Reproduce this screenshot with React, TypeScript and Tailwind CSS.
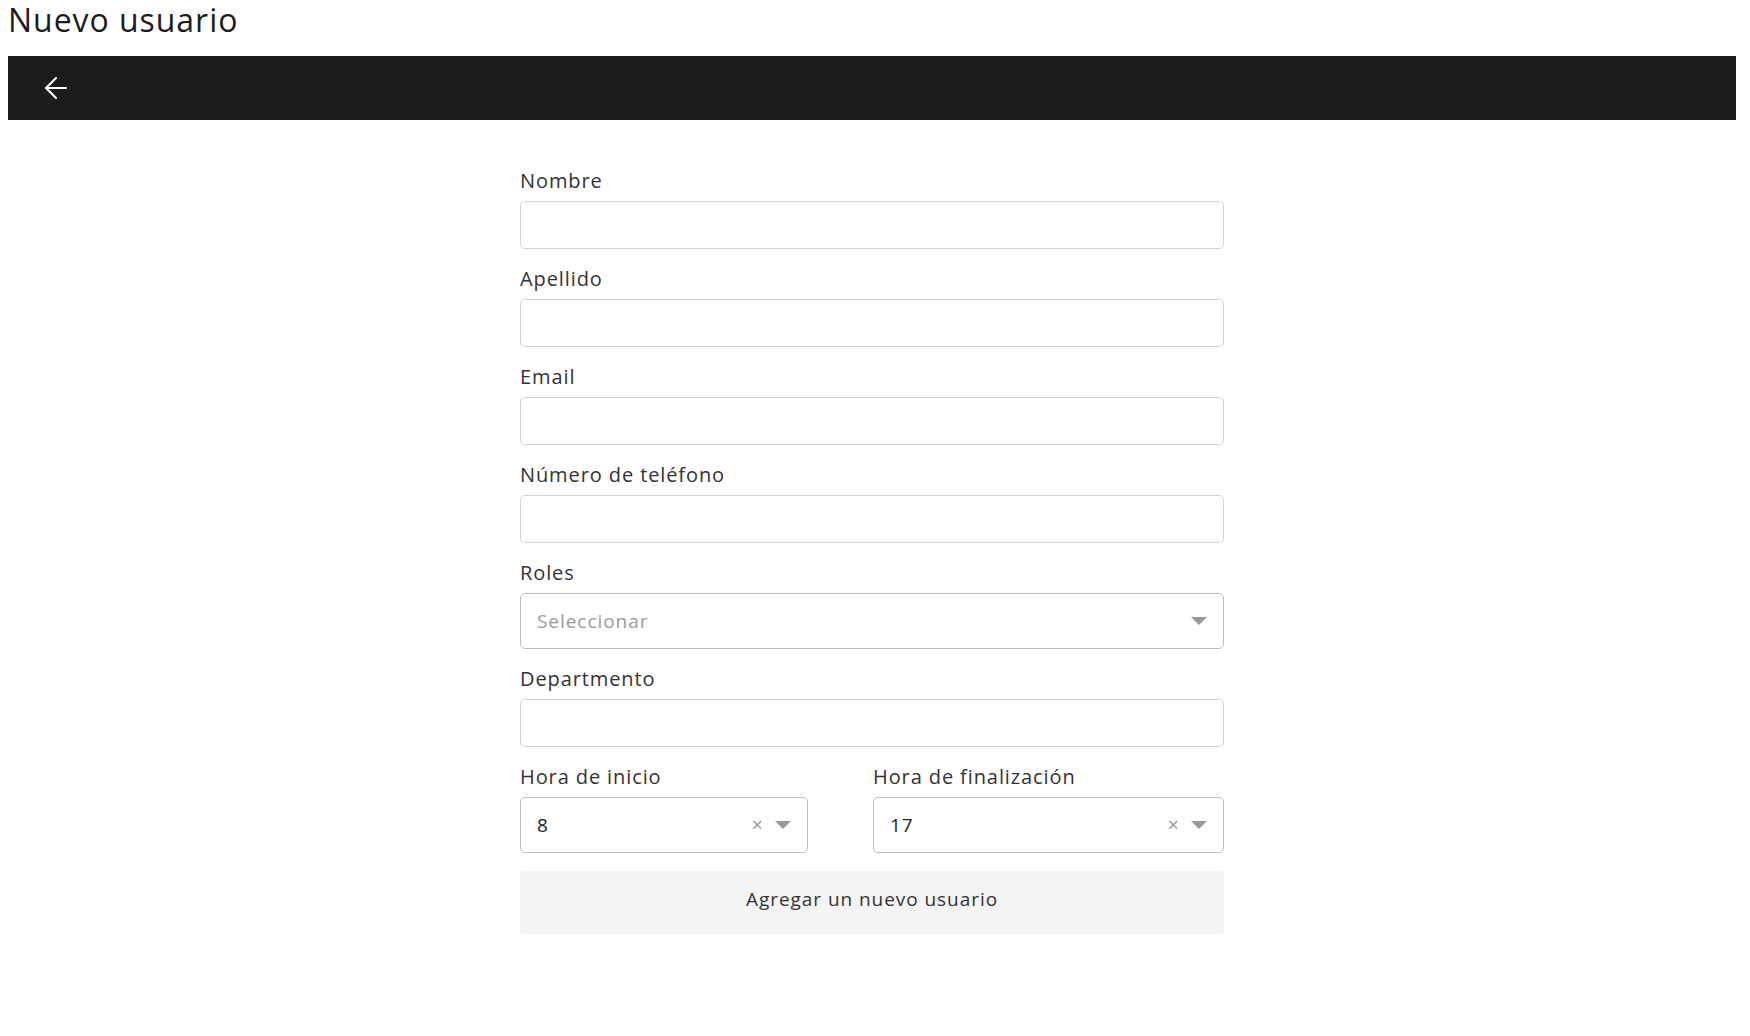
import { ArrowLeft } from "lucide-react";

function Field({ label }: { label: string }) {
  return (
    <div className="mb-[18px]">
      <label className="block h-6 mb-2 text-[20px] leading-6 tracking-[0.045em] text-[#333]">{label}</label>
      <input
        type="text"
        className="block w-full h-12 rounded-[5px] border border-[#d3d3d3] bg-white px-4 text-[18px] outline-none"
      />
    </div>
  );
}

function Caret() {
  return (
    <svg width="16" height="8" viewBox="0 0 16 8" className="shrink-0">
      <path d="M0 0h16L8 8z" fill="#999" />
    </svg>
  );
}

function HourSelect({ label, value, width }: { label: string; value: string; width: string }) {
  return (
    <div className={width}>
      <label className="block h-6 mb-2 text-[20px] leading-6 tracking-[0.045em] text-[#333]">{label}</label>
      <div className="flex items-center h-14 rounded-[5px] border border-[#bdbdbd] bg-white pl-4 pr-4">
        <span className="flex-1 text-[19px] tracking-[0.05em] text-[#222]">{value}</span>
        <span className="text-[20px] leading-none text-[#999] mr-3">×</span>
        <Caret />
      </div>
    </div>
  );
}

export default function App() {
  return (
    <div className="min-h-screen bg-white font-['Open_Sans',sans-serif] text-[#222]">
      <h1 className="ml-2 h-10 text-[32px] leading-10 tracking-[0.03em] text-[#1c1c1c]">Nuevo usuario</h1>
      <div className="mt-4 ml-2 mr-[14px]">
        <div className="flex items-center h-16 bg-[#1c1c1c] pl-[31px]">
          <button className="text-white">
            <ArrowLeft size={34} strokeWidth={1.5} />
          </button>
        </div>

        <form className="mx-auto w-[704px] pt-[49px]">
          <Field label="Nombre" />
          <Field label="Apellido" />
          <Field label="Email" />
          <Field label="Número de teléfono" />

          <div className="mb-[18px]">
            <label className="block h-6 mb-2 text-[20px] leading-6 tracking-[0.045em] text-[#333]">Roles</label>
            <div className="flex items-center h-14 rounded-[5px] border border-[#bdbdbd] bg-white px-4">
              <span className="flex-1 text-[19px] tracking-[0.05em] text-[#9a9a9a]">Seleccionar</span>
              <Caret />
            </div>
          </div>

          <Field label="Departmento" />

          <div className="flex justify-between mb-[18px]">
            <HourSelect label="Hora de inicio" value="8" width="w-[288px]" />
            <HourSelect label="Hora de finalización" value="17" width="w-[351px]" />
          </div>

          <button
            type="button"
            className="w-full h-[63px] pb-[6px] rounded-[3px] bg-[#f4f4f4] text-[19px] tracking-[0.05em] text-[#333]"
          >
            Agregar un nuevo usuario
          </button>
        </form>
      </div>
    </div>
  );
}
